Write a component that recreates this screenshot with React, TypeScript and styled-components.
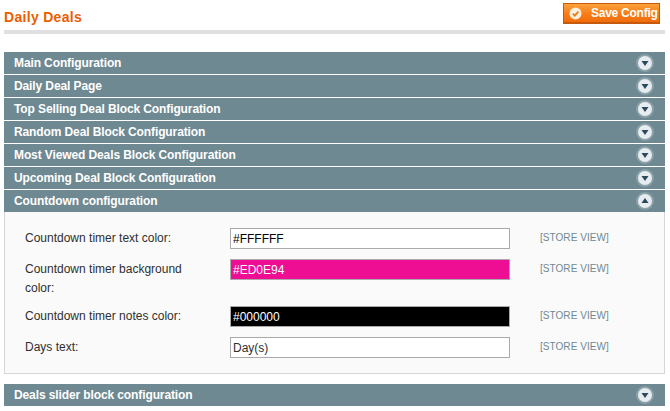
import { createGlobalStyle, styled } from "styled-components";

//types
type SectionProps = {
  title: string;
  open?: boolean;
};
type FieldData = {
  label: string;
  value: string;
  bg?: string;
  fg?: string;
  tall?: boolean;
};

//data
const closedSections = [
  "Main Configuration",
  "Daily Deal Page",
  "Top Selling Deal Block Configuration",
  "Random Deal Block Configuration",
  "Most Viewed Deals Block Configuration",
  "Upcoming Deal Block Configuration",
];
const fields: Array<FieldData> = [
  { label: "Countdown timer text color:", value: "#FFFFFF", bg: "#ffffff", fg: "#000000" },
  { label: "Countdown timer background color:", value: "#ED0E94", bg: "#ed0e94", fg: "#ffffff", tall: true },
  { label: "Countdown timer notes color:", value: "#000000", bg: "#000000", fg: "#ffffff" },
  { label: "Days text:", value: "Day(s)", bg: "#ffffff", fg: "#2f2f2f" },
];

//styles
const GlobalStyle = createGlobalStyle`
  html, body {
    margin: 0;
    background: #ffffff;
  }
  body {
    font-family: "Liberation Sans", Arial, sans-serif;
    font-size: 12px;
    color: #2f2f2f;
  }
`;
const Page = styled.div`
  width: 661px;
  height: 411px;
  padding: 0 5px 0 4px;
  overflow: hidden;
`;
const TitleBar = styled.div`
  display: flex;
  align-items: flex-start;
  justify-content: space-between;
  height: 30px;
  padding-top: 3px;
  box-sizing: border-box;
`;
const Title = styled.h3`
  margin: 6px 0 0;
  font-size: 14px;
  line-height: 17px;
  font-weight: 700;
  letter-spacing: 0.3px;
  color: #eb5e00;
`;
const SaveButton = styled.button`
  display: flex;
  align-items: center;
  gap: 9px;
  width: 97px;
  height: 21px;
  margin: 0 5px 0 0;
  padding: 0 0 0 5px;
  box-sizing: border-box;
  border: 1px solid #c65a0c;
  border-bottom-width: 2px;
  background: linear-gradient(#fda23c, #f77c16 55%, #f06d0c);
  color: #ffffff;
  font-family: inherit;
  font-size: 12px;
  font-weight: 700;
  letter-spacing: -0.25px;
  white-space: nowrap;
`;
const Divider = styled.div`
  height: 4px;
  margin-bottom: 18px;
  background: #e0e0e0;
`;
const SectionHeader = styled.div`
  display: flex;
  align-items: center;
  justify-content: space-between;
  height: 22px;
  padding: 0 11px 0 10px;
  margin-bottom: 1px;
  background: #6f8992;
  color: #ffffff;
  font-size: 12px;
  font-weight: 700;
  letter-spacing: -0.11px;
`;
const OpenPanel = styled.div`
  box-sizing: border-box;
  height: 162px;
  margin-top: -1px;
  margin-bottom: 10px;
  padding: 16px 0 0 20px;
  background: #fafafa;
  border: 1px solid #d6d6d6;
  border-top: 0;
`;
const FieldRow = styled.div<{ $tall?: boolean }>`
  display: grid;
  grid-template-columns: 205px 280px auto;
  height: ${(props) => (props.$tall ? "47px" : "31px")};
`;
const FieldLabel = styled.label`
  width: 180px;
  padding-top: 1px;
  line-height: 19px;
  color: #2f2f2f;
`;
const FieldInput = styled.input<{ $bg?: string; $fg?: string }>`
  box-sizing: border-box;
  width: 280px;
  height: 21px;
  margin: 0;
  padding: 2px 2px;
  border: 1px solid #aaaaaa;
  border-radius: 0;
  outline: none;
  background: ${(props) => props.$bg};
  color: ${(props) => props.$fg};
  font-family: inherit;
  font-size: 12px;
`;
const Scope = styled.span`
  padding: 3px 0 0 30px;
  font-size: 10px;
  line-height: 14px;
  letter-spacing: 0.05px;
  color: #6f8992;
`;

function ToggleIcon({ open }: { open?: boolean }) {
  return (
    <svg width="18" height="18" viewBox="0 0 18 18">
      <circle cx="9" cy="9" r="9" fill="#8ba1a9" />
      <circle cx="9" cy="9" r="7" fill="#e6ecef" />
      <path d={open ? "M9 6 L12.5 11 L5.5 11 Z" : "M5.5 7 L12.5 7 L9 12 Z"} fill="#2c4a5a" />
    </svg>
  );
}

function SaveIcon() {
  return (
    <svg width="13" height="13" viewBox="0 0 13 13">
      <circle cx="6.5" cy="6.5" r="6" fill="#fdeedd" />
      <path d="M3.8 6.6 L5.8 8.6 L9.4 4.6" fill="none" stroke="#ee7a14" strokeWidth="1.8" />
    </svg>
  );
}

function Section({ title, open }: SectionProps) {
  return (
    <SectionHeader>
      {title}
      <ToggleIcon open={open} />
    </SectionHeader>
  );
}

export default function App() {
  return (
    <Page>
      <GlobalStyle />
      <TitleBar>
        <Title>Daily Deals</Title>
        <SaveButton>
          <SaveIcon />
          Save Config
        </SaveButton>
      </TitleBar>
      <Divider />
      {closedSections.map((title) => (
        <Section key={title} title={title} />
      ))}
      <Section title="Countdown configuration" open />
      <OpenPanel>
        {fields.map((field) => (
          <FieldRow key={field.label} $tall={field.tall}>
            <FieldLabel>{field.label}</FieldLabel>
            <FieldInput readOnly value={field.value} $bg={field.bg} $fg={field.fg} />
            <Scope>[STORE VIEW]</Scope>
          </FieldRow>
        ))}
      </OpenPanel>
      <Section title="Deals slider block configuration" />
    </Page>
  );
}
